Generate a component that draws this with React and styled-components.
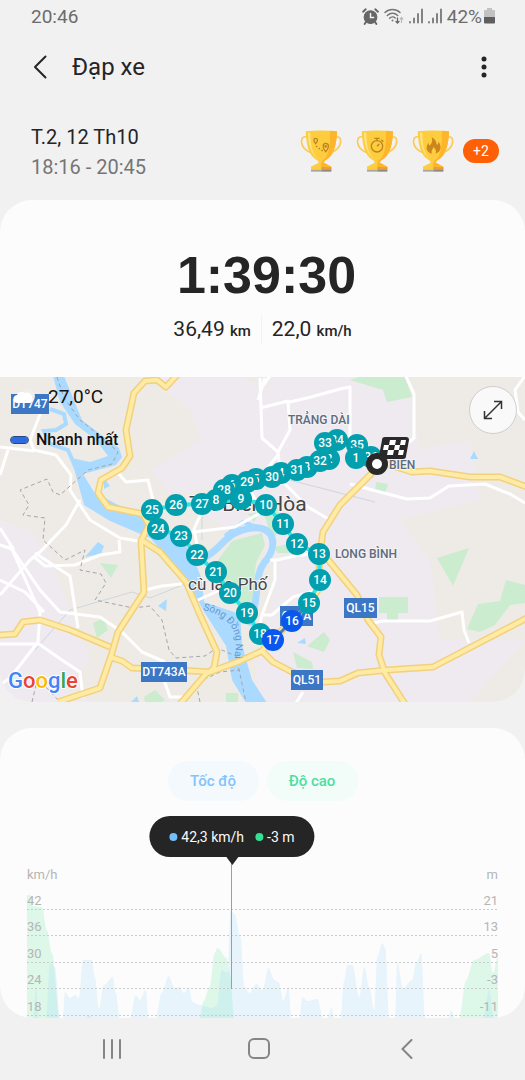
import React from "react";
import styled, { createGlobalStyle } from "styled-components";

const GlobalStyle = createGlobalStyle`
  * {
    box-sizing: border-box;
  }
  body {
    margin: 0;
    background: #f1f1f1;
    color: #252525;
    font-family: Roboto, "Noto Sans", sans-serif;
  }
  button {
    border: 0;
    padding: 0;
    background: none;
    color: inherit;
    font: inherit;
    cursor: pointer;
  }
  svg {
    display: block;
  }
`;

/* ---------- layout ---------- */

const Screen = styled.div`
  display: flex;
  flex-direction: column;
  min-height: 100vh;
`;

const StatusBar = styled.div`
  display: flex;
  align-items: center;
  justify-content: space-between;
  height: 32px;
  padding: 0 30px 0 31px;
  color: #6c6c6c;
  font-size: 19px;
`;

const StatusIcons = styled.div`
  display: flex;
  align-items: center;
  gap: 5px;
`;

const Battery = styled.span`
  display: flex;
  align-items: center;
  gap: 2px;
`;

const Header = styled.header`
  display: flex;
  align-items: center;
  height: 70px;
  padding: 0 25px 0 24px;
`;

const IconButton = styled.button`
  display: grid;
  place-items: center;
  width: 32px;
  height: 40px;
`;

const Title = styled.h1`
  flex: 1;
  margin: 0 0 0 16px;
  font-size: 24px;
  font-weight: 400;
`;

const Info = styled.section`
  display: flex;
  align-items: center;
  justify-content: space-between;
  height: 98px;
  padding: 0 26px 0 31px;
`;

const When = styled.div`
  padding-top: 2px;
  font-size: 20px;
  line-height: 30px;
`;

const Hours = styled.div`
  color: #757575;
`;

const Awards = styled.div`
  display: flex;
  align-items: center;
  gap: 14px;
`;

const More = styled.button`
  width: 36px;
  height: 24px;
  margin-left: -5px;
  border-radius: 12px;
  background: #ff5f05;
  color: #fff;
  font-size: 14px;
`;

const Card = styled.section`
  overflow: hidden;
  border-radius: 32px;
  background: #fcfcfc;
`;

/* ---------- summary ---------- */

const Summary = styled.div`
  display: flex;
  flex-direction: column;
  align-items: center;
  gap: 10px;
  padding: 45px 0 32px;
`;

const Duration = styled.time`
  padding-left: 8px;
  font-family: "Liberation Sans", Arial, sans-serif;
  font-size: 52px;
  font-weight: 700;
  line-height: 60px;
`;

const Stats = styled.div`
  display: flex;
  align-items: center;
  line-height: 28px;
`;

const Stat = styled.div`
  padding: 0 10px;
  font-size: 21px;

  & + & {
    border-left: 1px solid #f2f2f2;
  }
`;

const Unit = styled.span`
  font-size: 15px;
  font-weight: 500;
`;

/* ---------- map ---------- */

const MapBox = styled.div`
  position: relative;
`;

const MapSvg = styled.svg`
  width: 100%;
  height: auto;
  font-family: Roboto, "Noto Sans", sans-serif;
`;

const MapOverlay = styled.div`
  position: absolute;
  top: 8px;
  left: 11px;
  display: grid;
  gap: 20px;
  color: #111;
`;

const Weather = styled.div`
  display: flex;
  align-items: center;
  gap: 11px;
  padding-left: 2px;
  font-size: 19px;
  line-height: 24px;
`;

const Legend = styled.div`
  display: flex;
  align-items: center;
  gap: 8px;
  font-size: 16px;
  font-weight: 500;
  line-height: 22px;
`;

const Swatch = styled.span`
  width: 17px;
  height: 6px;
  border-radius: 3px;
  background: #2f6be0;
  outline: 1px solid #27467f;
`;

const Expand = styled.button`
  position: absolute;
  top: 9px;
  right: 8px;
  display: grid;
  place-items: center;
  width: 48px;
  height: 48px;
  border: 1px solid #cfcfcf;
  border-radius: 50%;
  background: #f9f9f9;
`;

/* ---------- chart ---------- */

const ChartCard = styled(Card)`
  margin-top: 26px;
  padding: 33px 27px 0;
`;

const Chips = styled.div`
  display: flex;
  justify-content: center;
  gap: 8px;
`;

const Chip = styled.button`
  width: 91px;
  height: 40px;
  border-radius: 20px;
  background: ${(p) => p.$bg};
  color: ${(p) => p.$color};
  font-size: 15px;
  font-weight: 500;
`;

const Chart = styled.div`
  position: relative;
  margin-top: 66px;
  color: #b5b5b5;
  font-size: 13px;
`;

const AxisTitles = styled.div`
  display: flex;
  justify-content: space-between;
  height: 16px;
  line-height: 16px;
`;

const Plot = styled.div`
  position: relative;
  height: 135px;
  padding-bottom: 2px;
`;

const Series = styled.svg`
  position: absolute;
  inset: 0;
  width: 100%;
  height: 100%;
  overflow: visible;
`;

const Grid = styled.div`
  position: relative;
  display: grid;
  grid-template-rows: repeat(5, 1fr);
  height: 100%;
`;

const GridRow = styled.div`
  display: flex;
  align-items: flex-end;
  justify-content: space-between;
  background: repeating-linear-gradient(90deg, #c9cccc 0 2px, transparent 2px 4px) bottom / 100% 1px no-repeat;
  line-height: 18px;
`;

const Cursor = styled.div`
  position: absolute;
  top: -10px;
  bottom: 29px;
  left: 43.4%;
  width: 1px;
  background: #9a9fa1;
`;

const Tooltip = styled.div`
  position: absolute;
  bottom: 100%;
  left: 50%;
  display: flex;
  align-items: center;
  gap: 4px;
  height: 41px;
  padding: 0 20px;
  border-radius: 21px;
  background: #252525;
  color: #fafafa;
  font-size: 14px;
  white-space: nowrap;
  transform: translateX(-50%);

  &::after {
    content: "";
    position: absolute;
    top: 100%;
    left: 50%;
    border: 6px solid transparent;
    border-top: 8px solid #252525;
    border-bottom: 0;
    transform: translateX(-50%);
  }
`;

const Dot = styled.span`
  width: 8px;
  height: 8px;
  border-radius: 50%;
  background: ${(p) => p.$color};

  * + & {
    margin-left: 7px;
  }
`;

const NavBar = styled.nav`
  display: grid;
  grid-template-columns: repeat(3, 1fr);
  place-items: center;
  height: 62px;
  padding: 0 44px 0 38px;
`;

/* ---------- data ---------- */

const HIGHWAYS = [
  "M178 374L166 387L157 380L145 381L134 393L126 430L130 456L122 468L101 480L98 493L108 507L143 514L149 525L141 541L144 592L118 632L111 656L100 688L58 702",
  "M143 541L160 552L186 582L200 615L217 652L214 668L205 675L180 704",
  "M0 635L15 634L23 622L40 620L70 630L110 647",
  "M110 657L122 661L132 668L160 669L210 672L240 661L262 651L273 638L303 612L318 590L320 553L323 532L340 505L377 468",
  "M384 463L412 472L430 471L470 477L500 477L527 487",
  "M320 550L357 595L368 620L381 637L379 655L385 673L405 704",
  "M262 651L273 662L292 672L323 682L340 681L358 673L387 670L433 667L527 618",
];

const STREETS = [
  "M48 394L30 440L34 450L56 455L71 475L70 490L90 520L120 538L138 541",
  "M0 447L34 451M8 450L0 475",
  "M80 500L66 525L40 552L30 560L0 595M0 545L12 549L40 590L60 612L100 617L122 632L142 652L165 662",
  "M0 528L14 550M35 553L70 576L78 628M33 556L45 566L75 565L100 555L120 552L119 540",
  "M10 545L30 590L40 612L38 642L10 678L0 685M0 644L39 644L62 660L80 672L83 698M0 580L25 592L44 612",
  "M118 473L126 482L148 480L153 500M145 590L162 586L182 584M164 680L170 697L183 697",
  "M260 408L288 401L290 402L311 397L340 389L350 387V448M288 402L290 430L278 452L262 438L260 378M278 452L281 480L308 507L330 520",
  "M405 374L414 394L414 438L396 453M350 484L380 492L407 499L430 498L449 486L485 484L510 494L525 503",
  "M198 600L220 590M185 533L235 527L262 512M200 560L194 529L205 505M262 512L250 490L278 455",
  "M270 560L277 560L295 556L318 553M275 560V580L262 615H272L293 597L318 590M262 615L255 645",
  "M373 623L383 621L430 621L462 612L464 630L469 643M303 692L296 703M265 378L258 400M270 376L260 390M525 376L515 390L518 412L525 420",
];

const PARKS = [
  "M365 375H404L412 397L387 402L383 390L350 380Z",
  "M376 482L388 484L385 493L375 492Z",
  "M437 558L469 548L453 586Z",
  "M379 597H408V613H398V620H387V613H379Z",
  "M467 629L478 604L500 601L506 580L525 585V603L510 605L495 625L480 632Z",
  "M218 560L232 541L262 533L265 545L256 563L252 600L245 612L224 588Z",
  "M262 510L278 508L282 528L272 540L266 520ZM275 547L292 543L290 553L277 553Z",
  "M100 563L118 565L111 578ZM93 623L104 618L108 630L97 638Z",
  "M307 646L324 632L330 640L324 652ZM293 652L312 662L313 669L297 668Z",
  "M144 697L155 690L165 700L160 703H145ZM226 693H238V703H226ZM248 514L260 512L254 522Z",
];

const PLACES = [
  "M0 520L30 530L50 555L70 610L90 660L60 690L100 702H0Z",
  "M150 377H245L280 400L275 450L250 480L170 495L152 470L200 440L190 410Z",
  "M270 377H350L410 400L420 450L470 440L480 500L400 520L430 560L440 640L525 640L470 702H250L280 560L180 500L250 480Z",
];

const TRACK = "M377 464L356 458L358 445L337 440L325 443L320 461L297 470L272 477L247 482L224 490L202 504L176 505L152 510L158 529L181 536L197 555L216 572L230 593L247 613L260 634L273 640M202 504L241 499L266 505L283 524L297 544L319 554L320 580L309 603L292 621";

const MARKERS = [
  [36, 371, 457], [2, 329, 459], [3, 307, 467], [4, 281, 473], [5, 256, 479], [6, 232, 485],
  [35, 357, 445], [34, 337, 440], [33, 325, 443], [32, 320, 461], [31, 297, 470], [30, 272, 477],
  [29, 247, 482], [28, 224, 490], [8, 216, 500], [27, 202, 504], [9, 241, 499], [10, 266, 505],
  [26, 176, 505], [24, 158, 529], [25, 152, 510], [23, 181, 536], [22, 197, 555], [21, 216, 572],
  [20, 230, 593], [19, 247, 613], [18, 260, 634], [14, 320, 580], [13, 319, 554], [12, 297, 544],
  [11, 283, 524], [15, 309, 603], [16, 292, 621, true], [17, 273, 640, true], [1, 356, 458],
];

const SHIELDS = [
  ["DT747", 11, 394, 38],
  ["DT743A", 141, 662, 46],
  ["QL51", 291, 670, 32],
  ["QL15", 344, 598, 33],
  ["QL1A", 280, 606, 33],
];

const LOGO = [["G", "#4285f4"], ["o", "#ea4335"], ["o", "#fbbc05"], ["g", "#4285f4"], ["l", "#34a853"], ["e", "#ea4335"]];

const GRID = [[42, 21], [36, 13], [30, 5], [24, -3], [18, -11]];

const SPEED = [
  [[6, 136], [9, 104], [12, 136]],
  [[19, 136], [23, 80], [28, 84], [33, 136]],
  [[36, 136], [38, 109], [43, 115], [48, 112], [52, 115], [56, 77], [65, 77], [68, 94], [72, 125], [77, 102], [86, 94], [89, 110], [93, 136]],
  [[103, 136], [109, 112], [113, 117], [119, 107], [122, 136]],
  [[129, 136], [135, 110], [142, 93], [148, 105], [153, 104], [157, 110], [162, 105], [166, 119], [173, 122], [185, 125], [190, 123], [195, 87], [201, 90], [204, 27], [208, 31], [214, 54], [218, 104], [223, 110], [230, 101], [236, 107], [242, 85], [248, 97], [252, 99], [257, 117], [262, 104], [265, 136]],
  [[273, 136], [276, 114], [281, 118], [291, 116], [297, 136]],
  [[301, 136], [305, 125], [308, 136]],
  [[314, 136], [318, 97], [321, 82], [326, 82], [333, 114], [338, 84], [343, 104], [348, 127], [351, 74], [356, 60], [359, 65], [363, 136]],
  [[369, 136], [371, 79], [377, 105], [386, 97], [390, 80], [395, 70], [399, 136]],
  [[422, 136], [425, 127], [429, 136]],
  [[457, 136], [463, 107], [468, 136]],
];

const ALTITUDE = [
  [[0, 136], [0, 12], [3, 12], [6, 23], [15, 24], [20, 47], [25, 70], [33, 136]],
  [[59, 136], [62, 132], [66, 136]],
  [[173, 136], [177, 118], [183, 104], [188, 70], [191, 65], [200, 75], [203, 90], [208, 136]],
  [[433, 136], [440, 97], [448, 77], [463, 70], [467, 90], [472, 74], [472, 136]],
];

const area = (points) =>
  points.reduce((d, [x, y], i) => {
    if (i === 0) return `M${x} ${y}`;
    const [px, py] = points[i - 1];
    const w = (x - px) / 3;
    return `${d}C${px + w} ${py} ${x - w} ${y} ${x} ${y}`;
  }, "") + "Z";

/* ---------- icons ---------- */

const AlarmIcon = () => (
  <svg width="17" height="17" viewBox="0 0 16 16" fill="none" stroke="#666" strokeLinecap="round">
    <circle cx="8" cy="8.5" r="6" fill="#666" />
    <path d="M1 3.5L3.5 1.2M15 3.5L12.500 1.200M3.800 13L2.500 15M12.200 13L13.500 15" strokeWidth="1.800" />
    <path d="M8 5.200V9H11" stroke="#f1f1f1" strokeWidth="1.400" />
  </svg>
);

const WifiIcon = () => (
  <svg width="20" height="17" viewBox="0 0 20 17" fill="none" stroke="#777" strokeWidth="1.500" strokeLinecap="round">
    <path d="M1 4.500C5 .5 12 .5 16 4.500M3.300 7.500C6.300 4.500 10.700 4.500 13.700 7.500M5.600 10.300C7.200 8.700 9.800 8.700 11.200 10" />
    <circle cx="8.500" cy="12.500" r="1" fill="#777" stroke="none" />
    <path d="M13.500 10V15M12 13.500L13.500 15L15 13.500" stroke="#666" strokeWidth="1.300" />
    <path d="M17.500 14.500V9.500M16.200 11L17.500 9.500L18.800 11" stroke="#bbb" strokeWidth="1.200" />
  </svg>
);

const SignalIcon = () => (
  <svg width="14" height="16" viewBox="0 0 14 16" stroke="#777" strokeWidth="1.800" strokeLinecap="round">
    <path d="M1 14.500V14M5 14.500V10.500M9 14.500V6M13 14.500V1.500" />
  </svg>
);

const BatteryIcon = () => (
  <svg width="11" height="16" viewBox="0 0 11 16">
    <path d="M3 0H8V2H10Q11 2 11 3V9H0V3Q0 2 1 2H3Z" fill="#c2c2c2" />
    <path d="M0 9H11V14.500Q11 15.500 10 15.500H1Q0 15.500 0 14.500Z" fill="#5f5f5f" />
  </svg>
);

const Trophy = ({ label, children }) => (
  <svg width="42" height="42" viewBox="0 0 126 126" fill="none" role="img" aria-label={label}>
    <path d="M22 21C-3 14-3 54 32 68M105 21C130 14 129 54 94 68" stroke="#fbc95a" strokeWidth="5" />
    <path d="M17 4Q64-1 111 4C110 43 101 72 87 83C79 90 72 91 72 98L94 110V119H33V110L56 98C56 91 49 90 41 83C27 72 18 43 17 4Z" fill="#fdcd3f" />
    <path d="M90 2L111 4C110 43 101 72 87 83C79 90 72 91 72 98L94 110V119H64V103L67 92C87 80 91 45 90 2Z" fill="#ffb529" />
    <path d="M23 8C25 48 35 77 57 87C36 74 32 45 31 8Z" fill="#ffe27b" />
    <path d="M33 119H64V125H33Z" fill="#a9a99f" />
    <path d="M64 111L94 112V119H64Z" fill="#ea9d39" />
    <path d="M64 119H94V125H64Z" fill="#8c8b88" />
    <g stroke="#bd8420" strokeWidth="4">{children}</g>
  </svg>
);

const Marker = ({ n, x, y, fast }) => (
  <g>
    <circle cx={x} cy={y} r="11" fill={fast ? "#0a57ee" : "#029fae"} />
    <text x={x} y={y + 4} fill="#fff" fontSize="12" fontWeight="500" textAnchor="middle">{n}</text>
  </g>
);

const FinishFlag = () => (
  <g>
    <path d="M385 437H406Q409 437 409 440L406 456Q406 459 403 459H382Q379 459 379 456L382 440Q382 437 385 437Z" fill="#292929" />
    <path d="M390 440H396L395 445H389ZM401 440H406L405 445H400ZM384 445H389L388 450H383ZM395 445H400L399 450H394ZM388 450H394L393 455H387ZM399 450H404L403 455H398Z" fill="#fff" />
    <circle cx="377" cy="464" r="8" fill="#fff" stroke="#292929" strokeWidth="6" />
  </g>
);

const RouteMap = () => (
  <MapSvg viewBox="0 377 525 325" role="img" aria-label="Biên Hòa">
    <path d="M0 377H525V702H0Z" fill="#eeebe6" />
    <g fill="#eeeaef">{PLACES.map((d) => <path key={d} d={d} />)}</g>
    <g fill="#cbecce">{PARKS.map((d) => <path key={d} d={d} />)}</g>
    <g fill="#aadaff">
      <path d="M53 376H64L73 398L82 420L100 434L119 448L122 457L116 465L83 474L94 492L118 505L160 522L190 550L201 577L204 602L240 614L242 645L252 680L267 703H246L232 680L226 646L203 610L186 577L150 538L110 521L84 505L75 472L71 458L90 462L108 456L96 440L75 424L60 402Z" />
      <path d="M85 557L98 542L104 546L101 554ZM158 606L167 599L166 611ZM470 459L474 451L478 459ZM104 478L110 486L104 489ZM297 643L305 638L306 644ZM131 702L137 696L139 702Z" />
    </g>
    <g fill="none" stroke="#aadaff">
      <path d="M196 562C225 550 222 532 252 528C273 525 280 545 264 563C253 578 261 600 248 625" strokeWidth="7" />
      <path d="M50 409L64 414L66 424L56 430L44 431L50 444L68 450L78 473" strokeWidth="4" />
      <path d="M225 536L243 522L260 528" strokeWidth="4" />
    </g>
    <g fill="none" stroke="#cfd6dc" strokeWidth="1">
      <path d="M202 500V540M282 478L375 502M35 650L70 610L132 592L150 598L185 584" />
    </g>
    <g fill="none" stroke="#fff" strokeWidth="3" strokeLinejoin="round">{STREETS.map((d) => <path key={d} d={d} />)}</g>
    <g fill="none" stroke="#a4a5a8" strokeWidth="1" strokeDasharray="4 3">
      <path d="M57 377L64 398L80 420L105 440L118 452L112 464L88 470L60 495L53 492L47 479L20 490L29 505L23 515L45 518L43 540L65 560L85 550L80 570L101 574L106 583L95 600L133 608L150 606L162 620L169 650L176 658L205 656L217 648L236 656L246 702" />
      <path d="M200 702L196 683L220 672L240 670M32 702L36 685L45 686L60 702" />
    </g>
    <g fill="none" stroke="#f2d07d" strokeWidth="7" strokeLinejoin="round">{HIGHWAYS.map((d) => <path key={d} d={d} />)}</g>
    <g fill="none" stroke="#ffeba3" strokeWidth="4" strokeLinejoin="round">{HIGHWAYS.map((d) => <path key={d} d={d} />)}</g>

    <g fill="#5c6b7e" fontSize="12" fontWeight="500" stroke="#f4f2f5" strokeWidth="2" paintOrder="stroke">
      <text x="288" y="424">TRẢNG DÀI</text>
      <text x="335" y="558">LONG BÌNH</text>
      <text x="389" y="469">BIEN</text>
    </g>
    <g fill="#454545" stroke="#f6f4f6" strokeWidth="2" paintOrder="stroke">
      <text x="189" y="511" fontSize="21">TP. Biên Hòa</text>
      <text x="188" y="590" fontSize="17">cù lao Phố</text>
    </g>
    <path id="river-name" d="M203 610Q241 618 235 654L234 684" fill="none" />
    <text fill="#6696cf" fontSize="10">
      <textPath href="#river-name">Sông Đồng Nai</textPath>
    </text>

    {SHIELDS.map(([name, x, y, w]) => (
      <g key={name}>
        <rect x={x} y={y} width={w} height="20" fill="#3b77c5" />
        <text x={x + w / 2} y={y + 14} fill="#fff" fontSize="12" fontWeight="500" textAnchor="middle">{name}</text>
      </g>
    ))}

    <path d={TRACK} fill="none" stroke="#35e3e3" strokeWidth="4" />
    <path d="M309 603L292 621L273 640" fill="none" stroke="#4b79b8" strokeWidth="3" />
    {MARKERS.map(([n, x, y, fast]) => <Marker key={n} n={n} x={x} y={y} fast={fast} />)}
    <FinishFlag />

    <text x="8" y="688" fontSize="22" fontWeight="500" stroke="#fff" strokeWidth="2" paintOrder="stroke">
      {LOGO.map(([ch, fill], i) => <tspan key={i} fill={fill}>{ch}</tspan>)}
    </text>
  </MapSvg>
);

const SpeedChart = () => (
  <Chart>
    <AxisTitles>
      <span>km/h</span>
      <span>m</span>
    </AxisTitles>
    <Plot>
      <Series viewBox="0 0 472 135" preserveAspectRatio="none" aria-hidden="true">
        <g fill="#ddf8e9">{ALTITUDE.map((s) => <path key={s[0][0]} d={area(s)} />)}</g>
        <g fill="#a8dcfa" fillOpacity="0.250">{SPEED.map((s) => <path key={s[0][0]} d={area(s)} />)}</g>
      </Series>
      <Grid>
        {GRID.map(([speed, altitude]) => (
          <GridRow key={speed}>
            <span>{speed}</span>
            <span>{altitude}</span>
          </GridRow>
        ))}
      </Grid>
    </Plot>
    <Cursor>
      <Tooltip role="tooltip">
        <Dot $color="#72bdfb" />
        <span>42,3 km/h</span>
        <Dot $color="#35df94" />
        <span>-3 m</span>
      </Tooltip>
    </Cursor>
  </Chart>
);

const App = () => {
  return (
    <Screen>
      <GlobalStyle />
      <StatusBar>
        <span>20:46</span>
        <StatusIcons>
          <AlarmIcon />
          <WifiIcon />
          <SignalIcon />
          <SignalIcon />
          <Battery>
            42%
            <BatteryIcon />
          </Battery>
        </StatusIcons>
      </StatusBar>

      <Header>
        <IconButton aria-label="Quay lại">
          <svg width="14" height="24" viewBox="0 0 14 24" fill="none" stroke="#252525" strokeWidth="2" strokeLinecap="round" strokeLinejoin="round">
            <path d="M12.500 1.500L2 12L12.500 22.500" />
          </svg>
        </IconButton>
        <Title>Đạp xe</Title>
        <IconButton aria-label="Tùy chọn khác">
          <svg width="6" height="22" viewBox="0 0 6 22" fill="#252525">
            <circle cx="3" cy="3" r="2.500" />
            <circle cx="3" cy="11" r="2.500" />
            <circle cx="3" cy="19" r="2.500" />
          </svg>
        </IconButton>
      </Header>

      <Info>
        <When>
          <div>T.2, 12 Th10</div>
          <Hours>18:16 - 20:45</Hours>
        </When>
        <Awards>
          <Trophy label="Quãng đường">
            <path d="M47 41C39 32 41 25 47 25C53 25 55 32 47 41ZM77 65C66 53 68 40 77 40C87 40 89 53 77 65Z" />
            <circle cx="77" cy="49" r="2" />
            <path d="M48 48L70 64" strokeDasharray="5 5" />
          </Trophy>
          <Trophy label="Thời gian">
            <circle cx="63" cy="49" r="17" />
            <path d="M55 25H71M63 25V32M76 29L82 35M63 49L70 42" />
          </Trophy>
          <Trophy label="Calo">
            <path d="M59 22C75 30 72 41 75 45C79 42 80 37 79 34C91 52 86 66 71 71C75 60 68 57 65 50C63 58 56 61 60 71C41 66 41 50 49 38C50 44 52 47 54 46C61 40 62 31 59 22Z" fill="#cc861e" stroke="none" />
          </Trophy>
          <More>+2</More>
        </Awards>
      </Info>

      <Card>
        <Summary>
          <Duration dateTime="PT1H39M30S">1:39:30</Duration>
          <Stats>
            <Stat>36,49 <Unit>km</Unit></Stat>
            <Stat>22,0 <Unit>km/h</Unit></Stat>
          </Stats>
        </Summary>
        <MapBox>
          <RouteMap />
          <MapOverlay>
            <Weather>
              <svg width="24" height="16" viewBox="0 0 24 16">
                <circle cx="15" cy="7" r="7" fill="#f1eee9" />
                <path d="M5 14A4 4 0 0 1 4 6A5 5 0 0 1 12 4A5 5 0 0 1 19 9A3 3 0 0 1 17 14Z" fill="#fff" />
              </svg>
              27,0°C
            </Weather>
            <Legend>
              <Swatch />
              Nhanh nhất
            </Legend>
          </MapOverlay>
          <Expand aria-label="Mở rộng bản đồ">
            <svg width="20" height="20" viewBox="0 0 20 20" fill="none" stroke="#333" strokeWidth="1.500">
              <path d="M1.500 18.500L18.500 1.500M11 1.500H18.500V9M1.500 11V18.500H9" />
            </svg>
          </Expand>
        </MapBox>
      </Card>

      <ChartCard>
        <Chips>
          <Chip $bg="#f4f9fd" $color="#83c4fa">Tốc độ</Chip>
          <Chip $bg="#f2fdf9" $color="#4fdea0">Độ cao</Chip>
        </Chips>
        <SpeedChart />
      </ChartCard>

      <NavBar>
        <IconButton aria-label="Gần đây">
          <svg width="20" height="20" viewBox="0 0 20 20" stroke="#858585" strokeWidth="2" strokeLinecap="round">
            <path d="M2 1V19M10 1V19M18 1V19" />
          </svg>
        </IconButton>
        <IconButton aria-label="Trang chủ">
          <svg width="22" height="22" viewBox="0 0 22 22" fill="none" stroke="#858585" strokeWidth="2">
            <rect x="1" y="1" width="20" height="19" rx="5" />
          </svg>
        </IconButton>
        <IconButton aria-label="Trở về">
          <svg width="12" height="20" viewBox="0 0 12 20" fill="none" stroke="#858585" strokeWidth="2" strokeLinecap="round">
            <path d="M10.500 1L1.500 10L10.500 19" />
          </svg>
        </IconButton>
      </NavBar>
    </Screen>
  );
};

export default App;
